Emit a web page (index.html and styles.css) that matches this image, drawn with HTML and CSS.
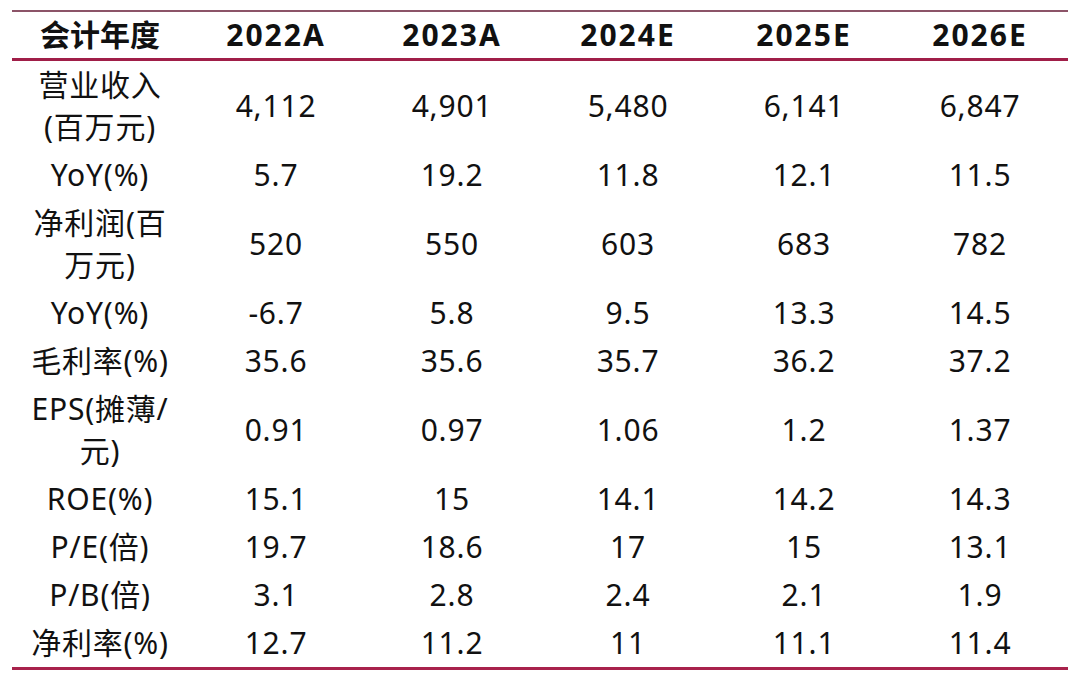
FILE: index.html
```html
<!DOCTYPE html>
<html lang="zh-CN">
<head>
<meta charset="utf-8">
<title>盈利预测</title>
<link rel="stylesheet" href="styles.css">
</head>
<body>
<table class="fin">
  <colgroup>
    <col class="c"><col class="c"><col class="c"><col class="c"><col class="c"><col class="c">
  </colgroup>
  <thead>
    <tr><th class="lbl">会计年度</th><th>2022A</th><th>2023A</th><th>2024E</th><th>2025E</th><th>2026E</th></tr>
  </thead>
  <tbody>
    <tr><td>营业收入<br>(百万元)</td><td>4,112</td><td>4,901</td><td>5,480</td><td>6,141</td><td>6,847</td></tr>
    <tr><td>YoY(%)</td><td>5.7</td><td>19.2</td><td>11.8</td><td>12.1</td><td>11.5</td></tr>
    <tr><td>净利润(百<br>万元)</td><td>520</td><td>550</td><td>603</td><td>683</td><td>782</td></tr>
    <tr><td>YoY(%)</td><td>-6.7</td><td>5.8</td><td>9.5</td><td>13.3</td><td>14.5</td></tr>
    <tr><td>毛利率(%)</td><td>35.6</td><td>35.6</td><td>35.7</td><td>36.2</td><td>37.2</td></tr>
    <tr><td>EPS(摊薄/<br>元)</td><td>0.91</td><td>0.97</td><td>1.06</td><td>1.2</td><td>1.37</td></tr>
    <tr><td>ROE(%)</td><td>15.1</td><td>15</td><td>14.1</td><td>14.2</td><td>14.3</td></tr>
    <tr><td>P/E(倍)</td><td>19.7</td><td>18.6</td><td>17</td><td>15</td><td>13.1</td></tr>
    <tr><td>P/B(倍)</td><td>3.1</td><td>2.8</td><td>2.4</td><td>2.1</td><td>1.9</td></tr>
    <tr><td>净利率(%)</td><td>12.7</td><td>11.2</td><td>11</td><td>11.1</td><td>11.4</td></tr>
  </tbody>
</table>
</body>
</html>
```

FILE: styles.css
```css
html, body {
  margin: 0;
  padding: 0;
  background: #ffffff;
}

body {
  padding: 10px 12px 0 12px;
  font-family: "Noto Sans", "Noto Sans CJK SC", sans-serif;
  color: #111111;
}

.fin {
  width: 1056px;
  table-layout: fixed;
  border-collapse: collapse;
  border-top: 2px solid #8c5468;
  border-bottom: 3px solid #a8224c;
}

.fin .c {
  width: 176px;
}

.fin th {
  font-size: 30px;
  font-weight: 700;
  line-height: 46px;
  height: 46px;
  padding: 0;
  text-align: center;
  letter-spacing: 2px;
  border-bottom: 3px solid #a01e48;
}

.fin th.lbl {
  letter-spacing: 0;
}

.fin td {
  font-size: 30px;
  font-weight: 400;
  line-height: 42px;
  padding: 3px 0;
  text-align: center;
  vertical-align: middle;
  letter-spacing: 0.8px;
}
```
